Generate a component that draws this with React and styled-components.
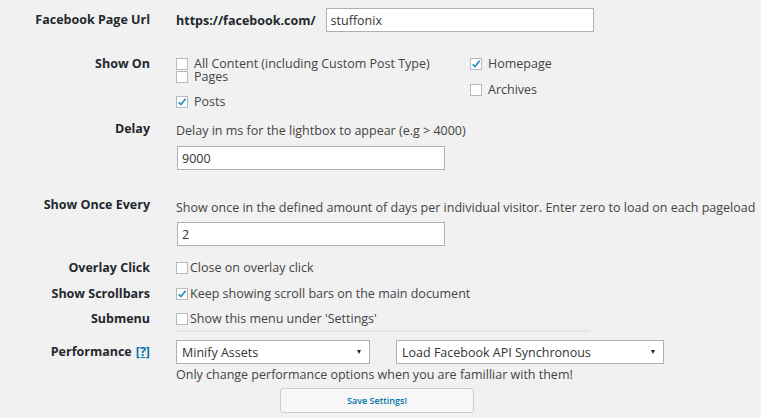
import React from "react";
import styled, { createGlobalStyle } from "styled-components";

const GlobalStyle = createGlobalStyle`
  body {
    margin: 0;
    background: #f1f1f1;
    font-family: "Open Sans", "Noto Sans", sans-serif;
    font-size: 12.5px;
    color: #444;
  }
`;

const Page = styled.div`
  padding-top: 8px;
  display: flex;
  flex-direction: column;
`;

const Row = styled.div`
  display: grid;
  grid-template-columns: 150px 1fr;
  column-gap: 26px;
  align-items: ${(props) => props.$align || "start"};
  margin-top: ${(props) => props.$mt || 0}px;
`;

const Label = styled.div`
  text-align: right;
  font-weight: 700;
  color: #23282d;
  line-height: ${(props) => props.$lh || 18}px;
  white-space: nowrap;
`;

const HelpLink = styled.a`
  color: #0073aa;
  text-decoration: underline;
  margin-left: 4px;
`;

const Field = styled.div`
  display: flex;
  flex-direction: ${(props) => (props.$row ? "row" : "column")};
  align-items: ${(props) => (props.$row ? "center" : "flex-start")};
  gap: ${(props) => props.$gap || 0}px;
  padding-top: ${(props) => props.$pt || 0}px;
`;

const Prefix = styled.span`
  font-weight: 700;
  color: #23282d;
`;

const TextInput = styled.input`
  box-sizing: border-box;
  width: ${(props) => props.$w}px;
  height: 24px;
  margin: ${(props) => props.$mt || 0}px 0 0 ${(props) => props.$ml || 0}px;
  padding: 0 4px;
  border: 1px solid #b0b0b0;
  background: #fff;
  font-family: inherit;
  font-size: 12.5px;
  color: #333;
  outline: none;
`;

const Desc = styled.div`
  line-height: 18px;
  white-space: nowrap;
  margin-top: ${(props) => props.$mt || 0}px;
`;

const Columns = styled.div`
  display: flex;
`;

const CheckColumn = styled.div`
  display: flex;
  flex-direction: column;
  width: ${(props) => props.$w || "auto"};
`;

const CheckItem = styled.label`
  display: flex;
  align-items: center;
  gap: ${(props) => props.$gap || 6}px;
  line-height: 18px;
  margin-top: ${(props) => props.$mt || 0}px;
  white-space: nowrap;
`;

const Box = styled.span`
  box-sizing: border-box;
  width: 12px;
  height: 12px;
  border: 1px solid #b4b9be;
  background: #fff;
  display: inline-flex;
  align-items: center;
  justify-content: center;
  flex-shrink: 0;
`;

const Divider = styled.div`
  width: 414px;
  height: 2px;
  background: #e6e6e6;
  margin-top: 2px;
`;

const Selects = styled.div`
  display: flex;
  gap: 26px;
`;

const Select = styled.div`
  box-sizing: border-box;
  width: ${(props) => props.$w}px;
  height: 24px;
  padding: 0 8px 0 5px;
  border: 1px solid #b0b0b0;
  background: #fff;
  display: flex;
  align-items: center;
  justify-content: space-between;
  color: #333;
`;

const Caret = styled.span`
  width: 0;
  height: 0;
  border-left: 2.5px solid transparent;
  border-right: 2.5px solid transparent;
  border-top: 4px solid #222;
`;

const Button = styled.button`
  box-sizing: border-box;
  width: 194px;
  height: 25px;
  margin: 4px 0 0 104px;
  border: 1px solid #cccccc;
  border-radius: 3px;
  background: #f7f7f7;
  color: #0073aa;
  font-family: inherit;
  font-size: 9px;
  font-weight: 600;
  cursor: pointer;
`;

function Checkbox({ checked, label, gap, mt }) {
  return (
    <CheckItem $gap={gap} $mt={mt}>
      <Box>
        {checked && (
          <svg width="10" height="10" viewBox="0 0 10 10">
            <path d="M1.6 5.2 L4 7.6 L8.6 1.8" fill="none" stroke="#1e8cbe" strokeWidth="1.6" />
          </svg>
        )}
      </Box>
      {label}
    </CheckItem>
  );
}

export default function App() {
  return (
    <>
      <GlobalStyle />
      <Page>
        <Row $align="center">
          <Label>Facebook Page Url</Label>
          <Field $row $gap={10}>
            <Prefix>https://facebook.com/</Prefix>
            <TextInput $w={268} defaultValue="stuffonix" />
          </Field>
        </Row>

        <Row $mt={23}>
          <Label>Show On</Label>
          <Columns>
            <CheckColumn $w="294px">
              <Checkbox label="All Content (including Custom Post Type)" />
              <Checkbox label="Pages" mt={-5} />
              <Checkbox label="Posts" checked mt={7} />
            </CheckColumn>
            <CheckColumn>
              <Checkbox label="Homepage" checked />
              <Checkbox label="Archives" mt={8} />
            </CheckColumn>
          </Columns>
        </Row>

        <Row $mt={9}>
          <Label>Delay</Label>
          <Field $pt={2}>
            <Desc>Delay in ms for the lightbox to appear (e.g &gt; 4000)</Desc>
            <TextInput $w={268} $mt={6} $ml={1} defaultValue="9000" />
          </Field>
        </Row>

        <Row $mt={26}>
          <Label>Show Once Every</Label>
          <Field $pt={3}>
            <Desc>
              Show once in the defined amount of days per individual visitor. Enter zero to load on each pageload
            </Desc>
            <TextInput $w={268} $mt={5} $ml={1} defaultValue="2" />
          </Field>
        </Row>

        <Row $mt={13}>
          <Label>Overlay Click</Label>
          <Checkbox label="Close on overlay click" gap={2} />
        </Row>

        <Row $mt={8}>
          <Label>Show Scrollbars</Label>
          <Checkbox label="Keep showing scroll bars on the main document" checked gap={2} />
        </Row>

        <Row $mt={7}>
          <Label>Submenu</Label>
          <Checkbox label="Show this menu under 'Settings'" gap={2} />
        </Row>

        <Row>
          <span />
          <Divider />
        </Row>

        <Row $mt={8}>
          <Label $lh={24}>
            Performance<HelpLink>[?]</HelpLink>
          </Label>
          <Field>
            <Selects>
              <Select $w={194}>
                Minify Assets
                <Caret />
              </Select>
              <Select $w={268}>
                Load Facebook API Synchronous
                <Caret />
              </Select>
            </Selects>
            <Desc $mt={2}>Only change performance options when you are familliar with them!</Desc>
            <Button>Save Settings!</Button>
          </Field>
        </Row>
      </Page>
    </>
  );
}
